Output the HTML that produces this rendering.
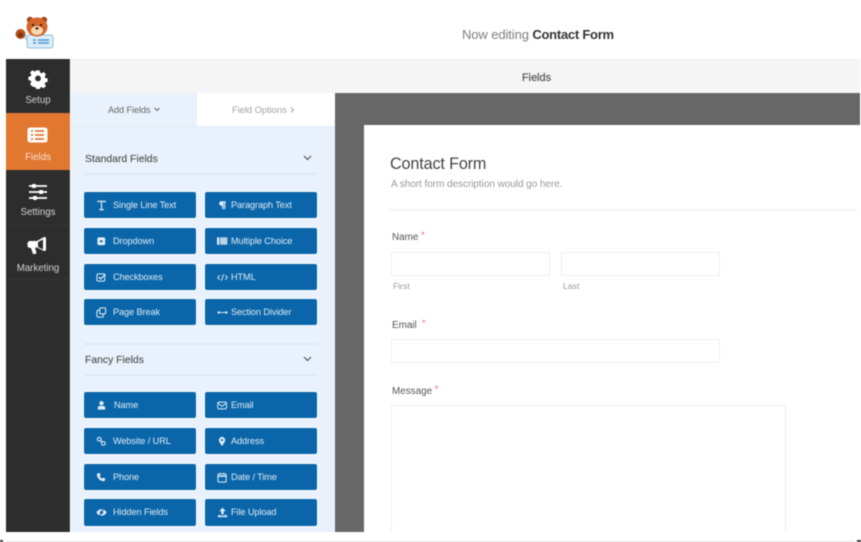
<!DOCTYPE html>
<html><head><meta charset="utf-8"><style>
html,body{margin:0;padding:0;width:861px;height:542px;overflow:hidden;background:#fff;font-family:"Liberation Sans",sans-serif}
#r{position:absolute;left:0;top:0;width:861px;height:542px;overflow:hidden;background:#fff;filter:blur(.45px)}
.a{position:absolute}
.t{position:absolute;white-space:nowrap;line-height:14px}
.btn{position:absolute;width:112px;height:26px;background:#0b66a9;border-radius:2px;box-shadow:0 0 0 1px #f8fbff}
.btn span{position:absolute;left:29px;top:6px;font-size:9.200px;line-height:14px;color:#dcebf6;white-space:nowrap;letter-spacing:-.1px}
.r span{left:26px}
.btn svg{position:absolute;left:12px;top:7.500px;width:11px;height:11px}
.nav{position:absolute;left:6px;width:64px;text-align:center;color:#d2d2d2;font-size:9.700px;line-height:12px}
.inp{position:absolute;background:#fff;border:1px solid #f0f0f0;box-sizing:border-box}
.lab{position:absolute;white-space:nowrap;font-size:9.900px;line-height:14px;color:#555}
.lab i{font-style:normal;color:#f66;font-size:9px;position:relative;top:-2px}
.sub{position:absolute;font-size:8.600px;color:#999;line-height:12px}
</style></head><body><div id="r">

<!-- logo -->
<svg class="a" style="left:14px;top:15px" width="42" height="35" viewBox="0 0 42 35">
<path d="M5 20l8 6 2-3-6-6z" fill="#c8e0f0"/>
<rect x="13" y="20" width="26" height="13" rx="2" fill="#dcedf8" stroke="#8fc0e0"/>
<path d="M19 25h3M24 25h11M19 28h3M24 28h11" stroke="#4c95cf" stroke-width="1.400"/>
<circle cx="6.500" cy="19" r="5" fill="#b8501e"/><circle cx="6.500" cy="20" r="2.500" fill="#7d3413"/>
<circle cx="16" cy="5" r="3.200" fill="#a5461a"/><circle cx="30" cy="5" r="3.200" fill="#a5461a"/>
<ellipse cx="23" cy="12" rx="10.500" ry="9.500" fill="#d3642a"/>
<ellipse cx="23" cy="15.500" rx="6" ry="4.500" fill="#f5d9b0"/>
<circle cx="19" cy="10" r="1.100" fill="#222"/><circle cx="27" cy="10" r="1.100" fill="#222"/>
<ellipse cx="23" cy="13.500" rx="1.700" ry="1.100" fill="#522"/>
</svg>

<!-- top title -->
<div class="t" style="left:462px;top:28px;font-size:13px;letter-spacing:-.1px;color:#7e7e7e">Now editing <span style="color:#333;font-weight:bold;letter-spacing:-.25px">Contact Form</span></div>

<!-- sidebar -->
<div class="a" style="left:6px;top:59px;width:64px;height:473px;background:#2d2d2d;border-right:1px solid #3d3d3d;box-sizing:border-box"></div>
<div class="a" style="left:6px;top:113px;width:64px;height:57px;background:#e27730"></div>
<div class="a" style="left:6px;top:225px;width:64px;height:1px;background:#363636"></div>
<div class="a" style="left:6px;top:279px;width:64px;height:1px;background:#363636"></div>

<svg class="a" style="left:28px;top:69px" width="20" height="20" viewBox="0 0 20 20"><path fill="#fff" fill-rule="evenodd" d="M8.200 1h3.600l.5 2.500 1.500.7 2.200-1.400 2.500 2.500-1.400 2.200.7 1.700 2.400.5v3.600l-2.400.5-.7 1.600 1.400 2.200-2.500 2.500-2.200-1.400-1.500.7-.5 2.400H8.200l-.5-2.400-1.500-.7L4 18.200l-2.500-2.500 1.400-2.200-.7-1.600L-.2 11.400V7.800l2.400-.5.7-1.700L1.500 3.400 4 .9l2.200 1.400 1.500-.7zM10 6.500a3 3 0 1 0 0 6.200 3 3 0 0 0 0-6.200z" transform="translate(.6 .4) scale(.94)"/></svg>
<div class="nav" style="top:95px">Setup</div>

<svg class="a" style="left:27px;top:127px" width="21" height="16" viewBox="0 0 21 16"><rect x=".5" y=".5" width="20" height="15" rx="2.500" fill="#fff"/><path d="M4 4h2M8 4h9M4 8h2M8 8h9M4 12h2M8 12h9" stroke="#e27730" stroke-width="1.700"/></svg>
<div class="nav" style="top:152px;color:#f8e2d2">Fields</div>

<svg class="a" style="left:28px;top:183px" width="20" height="18" viewBox="0 0 20 18"><path d="M1 3h18M1 9h18M1 15h18" stroke="#fff" stroke-width="1.700"/><rect x="4" y="1" width="4" height="4" rx="1" fill="#fff"/><rect x="11" y="7" width="4" height="4" rx="1" fill="#fff"/><rect x="5" y="13" width="4" height="4" rx="1" fill="#fff"/></svg>
<div class="nav" style="top:207px">Settings</div>

<svg class="a" style="left:27px;top:236px" width="21" height="19" viewBox="0 0 21 19"><path fill="#fff" d="M17 1l2 .5v13l-2 .5-7-3.500H8l1.500 5.500-1 1H6L4 12H3a2.500 2.500 0 0 1-2.500-2.500v-2A2.500 2.500 0 0 1 3 5h7z"/><path fill="#2d2d2d" d="M11 6l5-2.500v10L11 11z"/></svg>
<div class="nav" style="top:263px">Marketing</div>

<!-- header bar -->
<div class="a" style="left:71px;top:59px;width:789px;height:34px;background:#f5f5f5;border-top:1px solid #eee;box-sizing:border-box"></div>
<div class="t" style="left:522px;top:71px;font-size:11px;color:#555;letter-spacing:-.05px;-webkit-text-stroke:.2px #555">Fields</div>

<!-- tabs -->
<div class="a" style="left:71px;top:93px;width:126px;height:33px;background:#e9f2fc"></div>
<div class="a" style="left:197px;top:93px;width:138px;height:33px;background:#fff"></div>
<div class="t" style="left:108px;top:103px;font-size:9.200px;color:#666;letter-spacing:-.1px">Add Fields</div>
<svg class="a" style="left:154px;top:107px" width="6" height="5"><path d="M.5 1L3 3.500 5.500 1" fill="none" stroke="#666"/></svg>
<div class="t" style="left:232px;top:104px;font-size:9.500px;color:#a4a4a4;letter-spacing:-.1px">Field Options</div>
<svg class="a" style="left:290px;top:107px" width="5" height="6"><path d="M1 .5L3.500 3 1 5.500" fill="none" stroke="#a4a4a4"/></svg>

<!-- left panel -->
<div class="a" style="left:71px;top:126px;width:264px;height:406px;background:#e9f2fc;border-top:1px solid #e3ebf3;box-sizing:border-box"></div>
<div class="t" style="left:85px;top:153px;font-size:10.400px;color:#555;-webkit-text-stroke:.15px #555">Standard Fields</div>
<svg class="a" style="left:303px;top:155px" width="9" height="6"><path d="M1 1l3.500 3.500L8 1" fill="none" stroke="#555" stroke-width="1.200"/></svg>
<div class="a" style="left:84px;top:173px;width:233px;height:2px;background:#e0e8f1"></div>
<div class="a" style="left:84px;top:343px;width:234px;height:1.500px;background:#e0e8f1"></div>
<div class="t" style="left:85px;top:354px;font-size:10.400px;color:#555;-webkit-text-stroke:.15px #555">Fancy Fields</div>
<svg class="a" style="left:303px;top:356px" width="9" height="6"><path d="M1 1l3.500 3.500L8 1" fill="none" stroke="#555" stroke-width="1.200"/></svg>
<div class="a" style="left:84px;top:374px;width:234px;height:2px;background:#e0e8f1"></div>

<!-- standard buttons -->
<div class="btn" style="left:84px;top:192px"><svg viewBox="0 0 12 12"><path d="M2 2.500V1.500h8v1M6 1.500v9M3.500 10.500h5" fill="none" stroke="#e3eef7" stroke-width="1.300"/></svg><span>Single Line Text</span></div>
<div class="btn r" style="left:205px;top:192px"><svg viewBox="0 0 12 12"><path d="M3 1.500h6.500v1.500H9v7H7.700V3H7v7H5.700V6.500C4 6.500 2.500 5.500 2.500 4S3.500 1.500 3 1.500z" fill="#e3eef7"/></svg><span>Paragraph Text</span></div>
<div class="btn" style="left:84px;top:228px"><svg viewBox="0 0 12 12"><rect x="1.500" y="1.500" width="8.500" height="8.500" rx="1.500" fill="#e3eef7"/><rect x="4.200" y="4.700" width="3" height="2" fill="#0b66a9"/></svg><span>Dropdown</span></div>
<div class="btn r" style="left:205px;top:228px"><svg viewBox="0 0 12 12"><rect x="0" y="1.500" width="2.500" height="8" fill="#e3eef7"/><rect x="3.300" y="1.500" width="8" height="8" fill="#b9d3e8"/></svg><span>Multiple Choice</span></div>
<div class="btn" style="left:84px;top:264px"><svg viewBox="0 0 12 12"><rect x="1" y="2" width="8.500" height="8" rx="1.500" fill="none" stroke="#e3eef7" stroke-width="1.100"/><path d="M3 5.500l2 2 5.500-5" fill="none" stroke="#e3eef7" stroke-width="1.400"/></svg><span>Checkboxes</span></div>
<div class="btn r" style="left:205px;top:264px"><svg viewBox="0 0 12 12"><path d="M3 3.500L.8 6 3 8.500M9 3.500L11.200 6 9 8.500M7 2.500L5 9.500" fill="none" stroke="#e3eef7" stroke-width="1"/></svg><span>HTML</span></div>
<div class="btn" style="left:84px;top:299px"><svg viewBox="0 0 12 12"><rect x="1" y="3.500" width="7" height="7.500" rx="1.500" fill="none" stroke="#e3eef7" stroke-width="1.100"/><rect x="4" y="1" width="6.500" height="6.500" rx="1.500" fill="#0b66a9" stroke="#e3eef7" stroke-width="1.100"/></svg><span>Page Break</span></div>
<div class="btn r" style="left:205px;top:299px"><svg viewBox="0 0 12 12"><path d="M2 6h8" stroke="#e3eef7" stroke-width="1"/><circle cx="1.800" cy="6" r="1.300" fill="#e3eef7"/><circle cx="10.200" cy="6" r="1.300" fill="#e3eef7"/></svg><span>Section Divider</span></div>

<!-- fancy buttons -->
<div class="btn" style="left:84px;top:392px"><svg viewBox="0 0 12 12"><circle cx="6" cy="3.500" r="2.300" fill="#e3eef7"/><path d="M2 10.500V8.500a2 2 0 0 1 2-2h4a2 2 0 0 1 2 2v2z" fill="#e3eef7"/></svg><span style="left:30px">Name</span></div>
<div class="btn r" style="left:205px;top:392px"><svg viewBox="0 0 12 12"><rect x=".8" y="2.300" width="9.500" height="7.400" rx="1.200" fill="none" stroke="#e3eef7" stroke-width="1"/><path d="M1 3.500l4.500 3.500L10 3.500" fill="none" stroke="#e3eef7" stroke-width="1"/></svg><span>Email</span></div>
<div class="btn" style="left:84px;top:428px"><svg viewBox="0 0 12 12"><circle cx="3.500" cy="3.500" r="2" fill="none" stroke="#e3eef7" stroke-width="1.200"/><circle cx="8" cy="8" r="2" fill="none" stroke="#e3eef7" stroke-width="1.200"/><path d="M4.800 4.800l2 2" stroke="#e3eef7" stroke-width="1.200"/></svg><span>Website / URL</span></div>
<div class="btn r" style="left:205px;top:428px"><svg viewBox="0 0 12 12"><path fill="#e3eef7" fill-rule="evenodd" d="M5.500 1a3.400 3.400 0 0 1 3.400 3.400c0 2-2.200 4.700-3.400 6.600C4.300 9.100 2.100 6.400 2.100 4.400A3.400 3.400 0 0 1 5.500 1zm0 2.200a1.200 1.200 0 1 0 0 2.400 1.200 1.200 0 0 0 0-2.400z"/></svg><span>Address</span></div>
<div class="btn" style="left:84px;top:464px"><svg viewBox="0 0 12 12"><path fill="#e3eef7" d="M2 1.500l2-.5 1 2.500-1 1c.5 1.200 1.500 2.200 2.700 2.700l1-1 2.500 1-.5 2c-.2.500-.7.800-1.200.8C4.500 10 1 6.500 1 2.700c0-.5.400-1 1-1.200z"/></svg><span>Phone</span></div>
<div class="btn r" style="left:205px;top:464px"><svg viewBox="0 0 12 12"><rect x="1" y="2" width="9" height="9" rx="1.300" fill="none" stroke="#e3eef7" stroke-width="1.100"/><path d="M1 4.500h9" stroke="#e3eef7" stroke-width="1.600"/><path d="M3.500.8v2M7.500.8v2" stroke="#e3eef7"/></svg><span>Date / Time</span></div>
<div class="btn" style="left:84px;top:499px;height:27px"><svg viewBox="0 0 12 12"><path fill="#e3eef7" d="M6 2.500c2.500 0 4.500 1.500 5.500 3.500-1 2-3 3.500-5.500 3.500S1.500 8 .5 6c1-2 3-3.500 5.500-3.500z"/><circle cx="6" cy="6" r="1.800" fill="#0b66a9"/><path d="M8.500 1.500L3.500 10.500" stroke="#0b66a9" stroke-width="1"/></svg><span>Hidden Fields</span></div>
<div class="btn r" style="left:205px;top:499px;height:27px"><svg viewBox="0 0 12 12"><path fill="#e3eef7" d="M6 .8L9.500 4.500H7.300V8H4.700V4.500H2.500zM1 8.800h3v.7h4v-.7h3V11H1z"/></svg><span>File Upload</span></div>

<!-- canvas -->
<div class="a" style="left:335px;top:93px;width:525px;height:439px;background:#676767"></div>
<div class="a" style="left:364px;top:125px;width:496px;height:407px;background:#fff"></div>
<div class="t" style="left:390px;top:155px;font-size:16.200px;line-height:18px;color:#444;letter-spacing:-.15px">Contact Form</div>
<div class="t" style="left:391px;top:178px;font-size:10px;color:#999;letter-spacing:-.05px">A short form description would go here.</div>
<div class="a" style="left:389px;top:209px;width:468px;height:1.500px;background:#f3f3f3"></div>

<div class="lab" style="left:392px;top:230px">Name <i>*</i></div>
<div class="inp" style="left:391px;top:252px;width:159px;height:24px"></div>
<div class="inp" style="left:561px;top:252px;width:159px;height:24px"></div>
<div class="sub" style="left:393px;top:280px">First</div>
<div class="sub" style="left:563px;top:280px">Last</div>

<div class="lab" style="left:392px;top:318px">Email <i>&nbsp;*</i></div>
<div class="inp" style="left:391px;top:339px;width:329px;height:24px"></div>

<div class="lab" style="left:392px;top:384px">Message <i>*</i></div>
<div class="inp" style="left:391px;top:405px;width:395px;height:140px;border-width:1.500px"></div>

<!-- bottom band -->
<div class="a" style="left:0;top:532px;width:861px;height:10px;background:#fff"></div>
<div class="a" style="left:6px;top:541px;width:849px;height:1px;background:#e2e2e2"></div>
<div class="a" style="left:0;top:540px;width:3px;height:2px;background:#333"></div>
<div class="a" style="left:857px;top:540px;width:4px;height:2px;background:#333"></div>
</div></body></html>
